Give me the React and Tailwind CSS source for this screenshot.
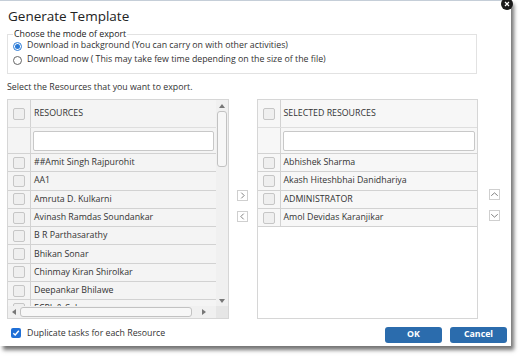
import React from "react";

const leftNames = [
  "##Amit Singh Rajpurohit",
  "AA1",
  "Amruta D. Kulkarni",
  "Avinash Ramdas Soundankar",
  "B R Parthasarathy",
  "Bhikan Sonar",
  "Chinmay Kiran Shirolkar",
  "Deepankar Bhilawe",
  "ECPL & Sales",
];
const rightNames = [
  "Abhishek Sharma",
  "Akash Hiteshbhai Danidhariya",
  "ADMINISTRATOR",
  "Amol Devidas Karanjikar",
];

function Box() {
  return <div className="w-[12px] h-[12px] rounded-[2px] border border-[#c6c6c6] bg-[#efefef]" />;
}

function Row({ name }) {
  return (
    <div className="flex h-[18.3px] border-b border-[#d2d2d2] shrink-0">
      <div className="w-[23px] flex items-center justify-center border-r border-[#d2d2d2] shrink-0">
        <Box />
      </div>
      <div className="flex-1 flex items-center pl-[3px] text-[8.8px] text-[#333] whitespace-nowrap overflow-hidden">
        {name}
      </div>
    </div>
  );
}

function Header({ title }) {
  return (
    <>
      <div className="flex h-[28px] border-b border-[#dedede] shrink-0">
        <div className="w-[23px] flex items-center justify-center border-r border-[#d2d2d2] shrink-0">
          <Box />
        </div>
        <div className="flex-1 flex items-center pl-[3px] text-[8.8px] text-[#333]">{title}</div>
      </div>
      <div className="flex h-[26px] border-b border-[#d2d2d2] shrink-0">
        <div className="w-[23px] border-r border-[#d2d2d2] shrink-0" />
        <div className="flex-1 flex items-center px-[2px]">
          <div className="w-full h-[20px] bg-white border border-[#c8c8c8] rounded-[2px]" />
        </div>
      </div>
    </>
  );
}

function Tri({ dir }) {
  const pts = {
    up: "0,4 3,0 6,4",
    down: "0,0 6,0 3,4",
    left: "4,0 4,6 0,3",
    right: "0,0 0,6 4,3",
  }[dir];
  const w = dir === "up" || dir === "down" ? 6 : 4;
  const h = dir === "up" || dir === "down" ? 4 : 6;
  return (
    <svg width={w} height={h} viewBox={`0 0 ${w} ${h}`}>
      <polygon points={pts} fill="#777" />
    </svg>
  );
}

function ChevBtn({ dir }) {
  const d = {
    right: "M4 2 L7.5 5.5 L4 9",
    left: "M7 2 L3.5 5.5 L7 9",
    up: "M1.5 7 L5.5 3.5 L9.5 7",
    down: "M1.5 4 L5.5 7.5 L9.5 4",
  }[dir];
  return (
    <div className="w-[11px] h-[11px] border border-[#cfcfcf] bg-white flex items-center justify-center">
      <svg width="11" height="11" viewBox="0 0 11 11">
        <path d={d} fill="none" stroke="#555" strokeWidth="0.9" />
      </svg>
    </div>
  );
}

export default function App() {
  return (
    <div className="w-[525px] h-[361px] bg-white relative overflow-hidden font-['Open_Sans','Liberation_Sans',sans-serif] text-[#333]">
      <div className="relative w-[511px] h-[346px] bg-white border-t border-[#c5ced8] shadow-[3px_4px_4px_rgba(0,0,0,0.55)] flex flex-col">
        {/* close button */}
        <div className="absolute right-[-2px] top-[-3px] w-[12px] h-[12px] rounded-full bg-[#1a1a1a] flex items-center justify-center">
          <svg width="6" height="6" viewBox="0 0 6 6">
            <path d="M1 1 L5 5 M5 1 L1 5" stroke="#fff" strokeWidth="1.2" />
          </svg>
        </div>

        <div className="pl-[8px] pt-[6px] h-[26px] text-[13.5px] leading-[18px] text-[#222] shrink-0">Generate Template</div>

        <fieldset className="ml-[7px] mt-[2px] w-[470px] h-[45px] border border-[#e2e2e2] pl-[5px] pr-1 shrink-0">
          <legend className="text-[8.8px] leading-[10px] text-[#222] px-[1px]">Choose the mode of export</legend>
          <div className="flex items-center h-[12px] mt-[1px]">
            <div className="w-[9px] h-[9px] rounded-full border border-[#2a7ad6] bg-white flex items-center justify-center">
              <div className="w-[5px] h-[5px] rounded-full bg-[#2a7ad6]" />
            </div>
            <span className="ml-[5px] text-[8.8px] text-[#333]">
              Download in background (You can carry on with other activities)
            </span>
          </div>
          <div className="flex items-center h-[12px] mt-[2px]">
            <div className="w-[9px] h-[9px] rounded-full border border-[#666] bg-white" />
            <span className="ml-[5px] text-[8.8px] text-[#333]">
              Download now ( This may take few time depending on the size of the file)
            </span>
          </div>
        </fieldset>

        <div className="pl-[7px] mt-[7px] h-[12px] text-[8.8px] leading-[12px] text-[#333] shrink-0">
          Select the Resources that you want to export.
        </div>

        <div className="flex mt-[6px] pl-[7px] shrink-0">
          {/* left list */}
          <div className="w-[222px] h-[220px] border border-[#d6d6d6] bg-[#f4f4f4] flex flex-col">
            <div className="flex flex-1 overflow-hidden">
              <div className="flex-1 flex flex-col overflow-hidden">
                <Header title="RESOURCES" />
                {leftNames.map((n) => (
                  <Row key={n} name={n} />
                ))}
              </div>
              <div className="w-[12px] bg-[#f0f0f0] flex flex-col items-center">
                <div className="h-[11px] flex items-center justify-center pt-[1px]">
                  <Tri dir="up" />
                </div>
                <div className="w-[10px] h-[56px] rounded-[3px] border border-[#c2c2c2] bg-[#f7f7f7]" />
                <div className="flex-1" />
                <div className="h-[10px] flex items-center justify-center">
                  <Tri dir="down" />
                </div>
              </div>
            </div>
            <div className="h-[12px] flex shrink-0 bg-[#f0f0f0]">
              <div className="flex-1 flex items-center">
                <div className="w-[12px] flex justify-center">
                  <Tri dir="left" />
                </div>
                <div className="w-[172px] h-[10px] rounded-[3px] border border-[#c2c2c2] bg-[#f7f7f7]" />
                <div className="flex-1 flex justify-center">
                  <Tri dir="right" />
                </div>
              </div>
              <div className="w-[12px] bg-[#e6e6e6]" />
            </div>
          </div>

          {/* middle arrows */}
          <div className="w-[28px] flex flex-col items-center pt-[91px] gap-[10px]">
            <ChevBtn dir="right" />
            <ChevBtn dir="left" />
          </div>

          {/* right list */}
          <div className="w-[222px] h-[220px] border border-[#d6d6d6] bg-white flex flex-col">
            <div className="bg-[#f7f7f7] flex flex-col">
              <Header title="SELECTED RESOURCES" />
              {rightNames.map((n) => (
                <Row key={n} name={n} />
              ))}
            </div>
          </div>

          <div className="w-[33px] flex flex-col items-center pt-[90px] gap-[10px]">
            <ChevBtn dir="up" />
            <ChevBtn dir="down" />
          </div>
        </div>

        <div className="flex items-start mt-[8px] pl-[11px] pr-[4px] shrink-0">
          <div className="mt-[1px] w-[10px] h-[10px] rounded-[2px] bg-[#1f6fd6] flex items-center justify-center">
            <svg width="8" height="8" viewBox="0 0 8 8">
              <path d="M1.3 4.2 L3.2 6 L6.8 1.8" fill="none" stroke="#fff" strokeWidth="1.4" />
            </svg>
          </div>
          <span className="ml-[6px] text-[8.8px] leading-[12px] text-[#333]">Duplicate tasks for each Resource</span>
          <div className="flex-1" />
          <button className="w-[57px] h-[16px] rounded-[3px] bg-[#2b6cad] text-white text-[8.8px] font-bold">OK</button>
          <button className="ml-[8px] w-[57px] h-[16px] rounded-[3px] bg-[#2b6cad] text-white text-[8.8px] font-bold">Cancel</button>
        </div>
      </div>
    </div>
  );
}
